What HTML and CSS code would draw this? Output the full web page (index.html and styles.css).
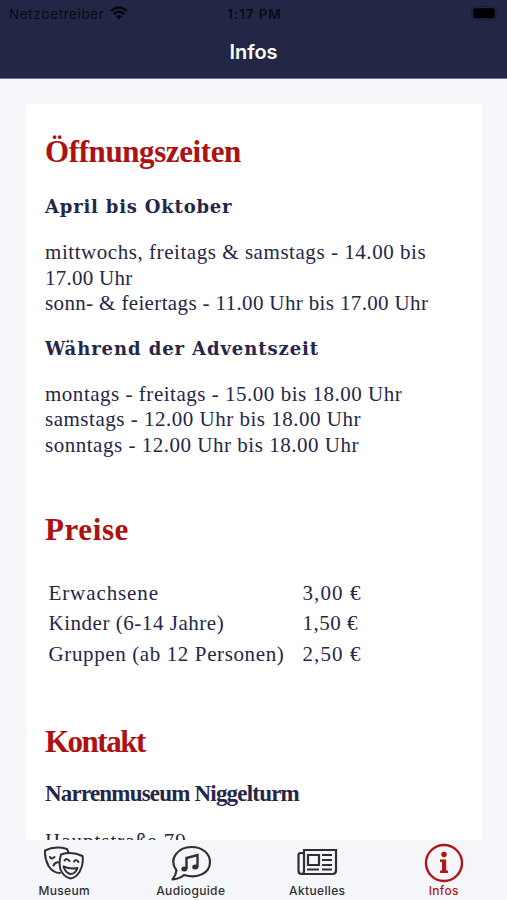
FILE: index.html
```html
<!DOCTYPE html>
<html lang="de">
<head>
<meta charset="utf-8">
<title>Infos</title>
<link rel="stylesheet" href="styles.css">
</head>
<body>
<div class="app">
  <header class="header">
    <div class="status">
      <div class="carrier"><span class="carrier-name">Netzbetreiber</span>
        <svg class="wifi" viewBox="0 0 18 14"><path d="M1 5.2Q9-2.2 17 5.2M3.8 8Q9 3.4 14.2 8" fill="none" stroke="#05060c" stroke-width="2.4"/><path d="M9 13.4 5.9 10.2Q9 7.8 12.1 10.2Z" fill="#05060c"/></svg>
      </div>
      <div class="time">1:17 PM</div>
      <svg class="battery" viewBox="0 0 29 15"><rect x=".5" y=".5" width="25" height="13.5" rx="4" fill="none" stroke="#1a1d39"/><rect x="2" y="2.2" width="22" height="10" rx="2.5" fill="#000"/><path d="M27 5v4.5q2-2.2 0-4.5" fill="#1a1d39"/></svg>
    </div>
    <h1 class="title">Infos</h1>
  </header>
  <main class="content">
    <article class="card">
      <h2 class="fraktur opening">Öffnungszeiten</h2>
      <h3 class="sub april">April bis Oktober</h3>
      <p class="text"><span class="l1">mittwochs, freitags &amp; samstags - 14.00 bis</span><br><span class="l2">17.00 Uhr</span><br><span class="l3">sonn- &amp; feiertags - 11.00 Uhr bis 17.00 Uhr</span></p>
      <h3 class="sub advent">Während der Adventszeit</h3>
      <p class="text"><span class="l4">montags - freitags - 15.00 bis 18.00 Uhr</span><br><span class="l5">samstags - 12.00 Uhr bis 18.00 Uhr</span><br><span class="l6">sonntags - 12.00 Uhr bis 18.00 Uhr</span></p>
      <h2 class="fraktur prices">Preise</h2>
      <div class="table">
        <span class="r1">Erwachsene</span><span class="price">3,00 €</span>
        <span class="r2">Kinder (6-14 Jahre)</span><span class="price p2">1,50 €</span>
        <span class="r3">Gruppen (ab 12 Personen)</span><span class="price">2,50 €</span>
      </div>
      <h2 class="fraktur contact">Kontakt</h2>
      <h3 class="fraktur name">Narrenmuseum Niggelturm</h3>
      <p class="text address">Hauptstraße 79</p>
    </article>
  </main>
  <nav class="tabs">
    <a class="tab"><svg class="icon" viewBox="0 0 42 36"><g fill="none" stroke="#303033" stroke-width="2" stroke-linecap="round" stroke-linejoin="round"><path d="M17 28Q10 28 5.500 21 1.500 13 2 5.500 12 .5 24 4l1.500 3.500"/><path d="M18 9.500q11-3.500 21.500 1.500 1.500 8-3 16-4 6-9 6.500-7-1.500-10-9-2-7 .5-15Z"/><path d="M7 12q1.500 3 4.500 0M10.500 20.500q2-4 5.500-3M21.500 15.500q2.500-3 5 .5M31 16.500q2.500-3 4.500.5"/><path d="M20.500 21.500q7 3 14 1.500-2 6-7 6-5-1-7-7.500Z"/></g></svg><span class="tab-label museum">Museum</span></a>
    <a class="tab"><svg class="icon" viewBox="0 0 42 36"><path d="M6.500 25.500C-2 14 8 2 21.500 2 33 2 40 9 40 17 40 28 28 34 14 30Q9 34 2.500 34.500 6 30 6.500 25.500Z" fill="none" stroke="#303033" stroke-width="2.200" stroke-linejoin="round"/><path d="M16.500 24V13l11-3v12" fill="none" stroke="#303033" stroke-width="2.400"/><ellipse cx="14.300" cy="24" rx="3" ry="2.500" fill="#303033"/><ellipse cx="25.200" cy="22" rx="3" ry="2.500" fill="#303033"/></svg><span class="tab-label audio">Audioguide</span></a>
    <a class="tab"><svg class="icon" viewBox="0 0 42 36"><g fill="none" stroke="#303033" stroke-width="2.200"><path d="M8 8H4.500Q2.500 8 2.500 10v15.500q0 3.500 3 3.500h31q3.500 0 3.500-3.500V5H8V26q0 3-2.500 3"/><path d="M12 10h11v10H12ZM26 10h10M26 15h10M26 20h10M11 24.500h12M26 24.500h10"/></g></svg><span class="tab-label news">Aktuelles</span></a>
    <a class="tab active"><svg class="icon info" viewBox="0 0 40 40"><circle cx="20" cy="20" r="18" fill="none" stroke="#af1616" stroke-width="2.400"/><circle cx="20" cy="11.500" r="2.700" fill="#af1616"/><path d="M16 16.500h6.200v11H24V30h-8v-2.500h2V19h-2Z" fill="#af1616"/></svg><span class="tab-label">Infos</span></a>
  </nav>
</div>
</body>
</html>
```
FILE: styles.css
```css
* { box-sizing: border-box; }
body { margin: 0; background: #f4f6fa; }
.app { width: 507px; height: 900px; display: flex; flex-direction: column; overflow: hidden; }
.header { height: 79px; flex: none; background: #232746; border-bottom: 1px solid #6d7291; font-family: Inter, sans-serif; }
.status { height: 27px; display: grid; grid-template-columns: 1fr auto 1fr; align-items: center; padding: 0 7px 0 9px; color: #080a14; font-size: 13.5px; }
.carrier { display: flex; align-items: center; gap: 6px; }
.carrier-name { letter-spacing: .6px; }
.wifi { width: 18px; height: 14px; margin-top: -2px; }
.time { font-weight: 600; letter-spacing: .9px; }
.battery { width: 29px; height: 15px; justify-self: end; }
.title { margin: 0; height: 51px; line-height: 51px; text-align: center; color: #fff; font-size: 20px; font-weight: 600; letter-spacing: 0; }
.content { height: 761px; flex: none; padding: 25px 25px 0 26px; overflow: hidden; }
.card { height: 736px; overflow: hidden; background: #fff; padding: 28px 19px 0; color: #252649; font-family: "Liberation Serif", serif; }
.fraktur { margin: 0; height: 40px; line-height: 40px; color: #ad1111; font-size: 31px; font-weight: 700; white-space: nowrap; }
.opening { letter-spacing: -.4px; }
.sub { margin: 0; height: 26px; line-height: 26px; font-family: "DejaVu Serif", serif; font-size: 18px; font-weight: 700; white-space: nowrap; }
.april { margin-top: 22px; letter-spacing: .8px; }
.text { margin: 20px 0 0; font-size: 21px; line-height: 25.6px; white-space: nowrap; }
.advent { margin-top: 19px; letter-spacing: .92px; }
.l1 { letter-spacing: .55px; }
.l2 { letter-spacing: .25px; }
.l3 { letter-spacing: .36px; }
.l4 { letter-spacing: .52px; }
.l5 { letter-spacing: .51px; }
.l6 { letter-spacing: .52px; }
.prices { margin-top: 51px; letter-spacing: .6px; }
.table { display: grid; grid-template-columns: 254px auto; grid-auto-rows: 30.500px; line-height: 30.500px; font-size: 21px; margin: 28px 0 0 3.500px; white-space: nowrap; }
.r1 { letter-spacing: .9px; }
.r2 { letter-spacing: .53px; }
.r3 { letter-spacing: .62px; }
.price { letter-spacing: 1.1px; }
.p2 { letter-spacing: .5px; }
.contact { margin-top: 53px; letter-spacing: -1.5px; }
.name { margin-top: 17px; height: 30px; line-height: 30px; font-size: 23px; color: #252649; letter-spacing: -.8px; }
.address { margin-top: 20px; letter-spacing: 1px; }
.tabs { height: 60px; flex: none; display: grid; grid-template-columns: repeat(4, 126.500px); padding-left: 1px; font-family: Inter, sans-serif; }
.tab { display: flex; flex-direction: column; align-items: center; color: #303033; font-size: 12px; font-weight: 500; }
.icon { width: 42px; height: 36px; margin-top: 5px; }
.info { width: 40px; height: 40px; margin-top: 3px; }
.tab-label { margin-top: 2px; line-height: 16px; letter-spacing: .35px; }
.active { color: #af1616; }
.active .tab-label { margin-top: 0; }
```
